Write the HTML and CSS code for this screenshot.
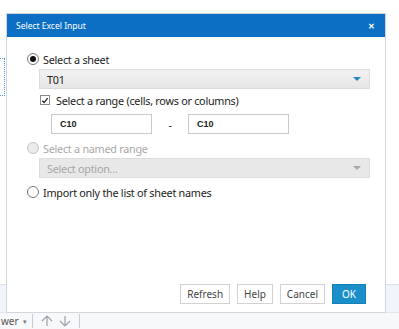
FILE: index.html
```html
<!DOCTYPE html>
<html lang="en">
<head>
    <meta charset="UTF-8">
    <title>Select Excel Input</title>
    <link rel="stylesheet" href="styles.css">
</head>
<body>
    <div class="app">
        <div class="sheet-area">
            <div class="cell-marker"></div>
        </div>
        <div class="band"></div>
        <div class="toolbar">
            <span class="tb-text">wer</span>
            <span class="tb-caret">&#9662;</span>
            <span class="tb-sep"></span>
            <svg class="tb-arrow" width="12" height="12" viewBox="0 0 12 12"><path d="M6 11V1M1 6l5-5 5 5" fill="none" stroke="#9aa3ad" stroke-width="1.2"/></svg>
            <svg class="tb-arrow" width="12" height="12" viewBox="0 0 12 12"><path d="M6 1v10M1 6l5 5 5-5" fill="none" stroke="#9aa3ad" stroke-width="1.2"/></svg>
            <span class="tb-sep"></span>
        </div>
    </div>

    <div class="dialog">
        <div class="titlebar">
            <span>Select Excel Input</span>
            <span class="close">&#x2715;</span>
        </div>
        <div class="dialog-body">
            <label class="option">
                <span class="radio checked"></span>
                <span>Select a sheet</span>
            </label>
            <div class="select">
                <span>T01</span>
                <span class="caret"></span>
            </div>
            <label class="option check-row">
                <span class="checkbox">
                    <svg width="9" height="9" viewBox="0 0 9 9"><path d="M1.5 4.8l2 2 4-5" fill="none" stroke="#222" stroke-width="1.5"/></svg>
                </span>
                <span>Select a range (cells, rows or columns)</span>
            </label>
            <div class="range-row">
                <input class="range-input" type="text" value="C10">
                <span class="dash">-</span>
                <input class="range-input" type="text" value="C10">
            </div>
            <label class="option disabled">
                <span class="radio"></span>
                <span>Select a named range</span>
            </label>
            <div class="select select-disabled">
                <span>Select option...</span>
                <span class="caret"></span>
            </div>
            <label class="option last">
                <span class="radio"></span>
                <span>Import only the list of sheet names</span>
            </label>
        </div>
        <div class="footer">
            <button class="btn">Refresh</button>
            <button class="btn">Help</button>
            <button class="btn">Cancel</button>
            <button class="btn btn-ok">OK</button>
        </div>
    </div>
</body>
</html>
```

FILE: styles.css
```css
body {
    margin: 0;
    font-family: "Noto Sans", "Open Sans", sans-serif;
    background: #fff;
    overflow: hidden;
}
.app {
    height: 329px;
    display: flex;
    flex-direction: column;
}
.sheet-area {
    flex: 1;
    padding-top: 58px;
}
.cell-marker {
    width: 5px;
    height: 38px;
    border: 1px dotted #5b9bd5;
    border-left: none;
    box-sizing: border-box;
}
.band {
    height: 27px;
    background: #f1f5fb;
    border-top: 1px solid #dbe3ee;
}
.toolbar {
    height: 16px;
    background: #f7f8fa;
    border-top: 1px solid #e3e6ea;
    display: flex;
    align-items: center;
    font-size: 10px;
    color: #555;
}
.tb-text {
    margin-left: 1px;
}
.tb-caret {
    font-size: 7px;
    color: #777;
    margin-left: 4px;
}
.tb-sep {
    width: 1px;
    height: 14px;
    background: #c8cdd3;
    margin: 0 5px 0 5px;
}
.tb-arrow {
    margin: 0 3px;
}

.dialog {
    position: absolute;
    left: 6px;
    top: 13px;
    width: 380px;
    height: 300px;
    box-sizing: border-box;
    border: 1px solid #d3d7dc;
    background: #fff;
    display: flex;
    flex-direction: column;
}
.titlebar {
    height: 23px;
    background: #0c6fc4;
    color: #fff;
    font-size: 8.5px;
    display: flex;
    align-items: center;
    justify-content: space-between;
    padding: 0 10px 0 9px;
}
.close {
    font-size: 8px;
    font-weight: bold;
}
.dialog-body {
    flex: 1;
    padding: 14px 15px 0 20px;
    font-size: 10.8px;
    letter-spacing: -0.25px;
    color: #222;
}
.option {
    display: flex;
    align-items: center;
    height: 16px;
    gap: 4px;
}
.radio {
    width: 12px;
    height: 12px;
    box-sizing: border-box;
    border: 1px solid #777;
    border-radius: 50%;
    background: #fff;
    display: flex;
    align-items: center;
    justify-content: center;
}
.radio.checked::after {
    content: "";
    width: 6px;
    height: 6px;
    border-radius: 50%;
    background: #111;
}
.disabled {
    color: #a8a8a8;
}
.disabled .radio {
    border-color: #c4c4c4;
    background: #ececec;
}
.select {
    margin: 2px 0 0 12px;
    width: 331px;
    height: 20px;
    box-sizing: border-box;
    border: 1px solid #dcdcdc;
    background: linear-gradient(#f2f2f2, #e6e6e6);
    display: flex;
    align-items: center;
    justify-content: space-between;
    padding: 0 8px 0 7px;
}
.caret {
    width: 0;
    height: 0;
    border-left: 4px solid transparent;
    border-right: 4px solid transparent;
    border-top: 4px solid #1e88c8;
}
.select-disabled {
    background: #e8e8e8;
    color: #a6a6a6;
}
.select-disabled .caret {
    border-top-color: #a8a8a8;
}
.check-row {
    margin: 3px 0 0 13px;
    gap: 6px;
}
.checkbox {
    width: 10px;
    height: 10px;
    box-sizing: border-box;
    border: 1px solid #888;
    background: #fff;
    display: flex;
    align-items: center;
    justify-content: center;
}
.range-row {
    display: flex;
    align-items: center;
    margin: 6px 0 0 24px;
}
.range-input {
    width: 101px;
    height: 20px;
    box-sizing: border-box;
    border: 1px solid #c9c9c9;
    padding: 0 8px;
    font-family: "Liberation Sans", Arial, sans-serif;
    font-size: 9px;
    font-weight: bold;
    color: #222;
}
.dash {
    width: 36px;
    text-align: center;
}
.option.disabled {
    margin-top: 6px;
}
.option.last {
    margin-top: 6px;
}
.footer {
    display: flex;
    justify-content: flex-end;
    gap: 7px;
    padding: 0 19px 8px 0;
}
.btn {
    height: 20px;
    padding: 0 6px;
    border: 1px solid #d2d2d2;
    background: #fff;
    font-family: "Noto Sans", sans-serif;
    font-size: 10px;
    color: #444;
}
.btn-ok {
    background: #1a8fca;
    border-color: #1581b8;
    color: #fff;
    padding: 0 9px;
}
```
